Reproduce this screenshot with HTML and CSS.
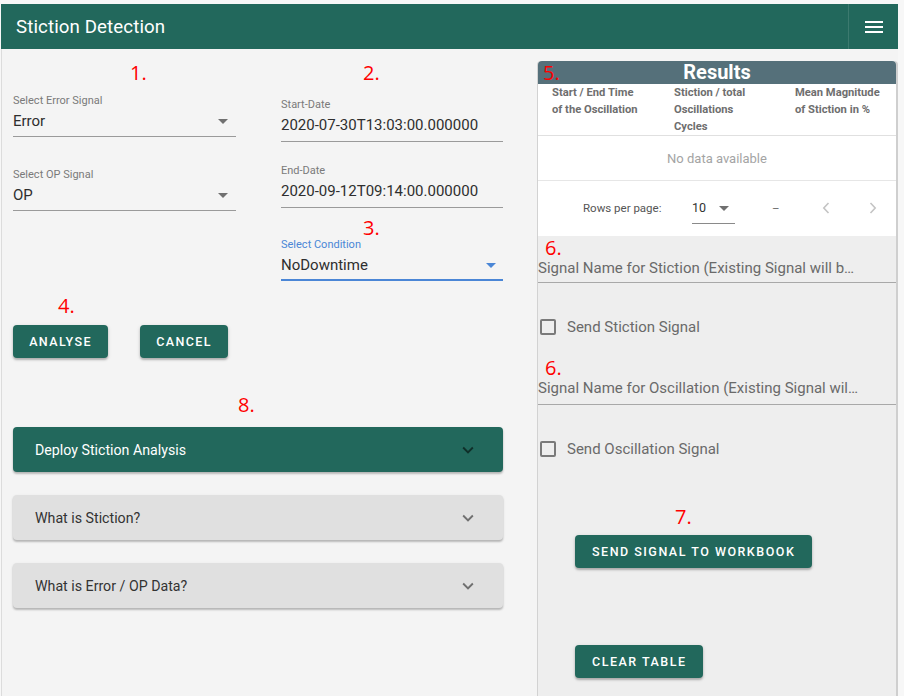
FILE: index.html
```html
<!DOCTYPE html>
<html lang="en">
<head>
<meta charset="utf-8">
<title>Stiction Detection</title>
<link rel="stylesheet" href="styles.css">
</head>
<body>
<div class="app">
  <header class="topbar">
    <div class="title">Stiction Detection</div>
    <div class="menu-btn">
      <svg width="24" height="24" viewBox="0 0 24 24"><path fill="#fff" d="M3,6H21V8H3V6M3,11H21V13H3V11M3,16H21V18H3V16Z"/></svg>
    </div>
  </header>
  <div class="main">
    <section class="left">
      <div class="fields">
        <div class="col">
          <div class="mark m1">1.</div>
          <div class="field select f-error">
            <div class="label">Select Error Signal</div>
            <div class="value"><span>Error</span><span class="caret"></span></div>
          </div>
          <div class="field select f-op">
            <div class="label">Select OP Signal</div>
            <div class="value"><span>OP</span><span class="caret"></span></div>
          </div>
        </div>
        <div class="col">
          <div class="mark m2">2.</div>
          <div class="field text f-start">
            <div class="label">Start-Date</div>
            <div class="value"><span>2020-07-30T13:03:00.000000</span></div>
          </div>
          <div class="field text f-end">
            <div class="label">End-Date</div>
            <div class="value"><span>2020-09-12T09:14:00.000000</span></div>
          </div>
          <div class="mark m3">3.</div>
          <div class="field select active f-cond">
            <div class="label">Select Condition</div>
            <div class="value"><span>NoDowntime</span><span class="caret"></span></div>
          </div>
        </div>
      </div>
      <div class="mark m4">4.</div>
      <div class="btn-row">
        <button class="btn">ANALYSE</button>
        <button class="btn">CANCEL</button>
      </div>
      <div class="mark m8">8.</div>
      <div class="panels">
        <div class="panel primary">
          <span>Deploy Stiction Analysis</span>
          <svg class="chev" width="22" height="22" viewBox="0 0 24 24"><path d="M7.41,8.58L12,13.17L16.59,8.58L18,10L12,16L6,10L7.41,8.58Z"/></svg>
        </div>
        <div class="panel">
          <span>What is Stiction?</span>
          <svg class="chev" width="22" height="22" viewBox="0 0 24 24"><path d="M7.41,8.58L12,13.17L16.59,8.58L18,10L12,16L6,10L7.41,8.58Z"/></svg>
        </div>
        <div class="panel">
          <span>What is Error / OP Data?</span>
          <svg class="chev" width="22" height="22" viewBox="0 0 24 24"><path d="M7.41,8.58L12,13.17L16.59,8.58L18,10L12,16L6,10L7.41,8.58Z"/></svg>
        </div>
      </div>
    </section>
    <section class="right">
      <div class="results-head">
        <span class="mark m5">5.</span>
        <span class="results-title">Results</span>
        <span></span>
      </div>
      <div class="table">
        <div class="thead">
          <div>Start / End Time<br>of the Oscillation</div>
          <div>Stiction / total<br>Oscillations<br>Cycles</div>
          <div>Mean Magnitude<br>of Stiction in %</div>
        </div>
        <div class="nodata">No data available</div>
        <div class="tfoot">
          <span class="rpp">Rows per page:</span>
          <span class="rpp-select"><span>10</span><span class="caret small"></span></span>
          <span class="dash">–</span>
          <svg class="pager" width="8" height="12" viewBox="0 0 8 12"><path d="M6.5 1 L1.8 6 L6.5 11" fill="none" stroke="#c4c4c4" stroke-width="1.6"/></svg>
          <svg class="pager" width="8" height="12" viewBox="0 0 8 12"><path d="M1.5 1 L6.2 6 L1.5 11" fill="none" stroke="#c4c4c4" stroke-width="1.6"/></svg>
        </div>
      </div>
      <div class="send">
        <div class="mark m6">6.</div>
        <div class="tfield">Signal Name for Stiction (Existing Signal will b…</div>
        <label class="check"><span class="box"></span><span>Send Stiction Signal</span></label>
        <div class="mark m6b">6.</div>
        <div class="tfield t2">Signal Name for Oscillation (Existing Signal wil…</div>
        <label class="check c2"><span class="box"></span><span>Send Oscillation Signal</span></label>
        <div class="mark m7">7.</div>
        <button class="btn wide">SEND SIGNAL TO WORKBOOK</button>
        <button class="btn wide clear">CLEAR TABLE</button>
      </div>
    </section>
  </div>
</div>
</body>
</html>
```
FILE: styles.css
```css
* { box-sizing: border-box; }
html, body { margin: 0; padding: 0; }
body {
  background: #f7f7f7;
  font-family: Roboto, "Liberation Sans", sans-serif;
  height: 696px;
  overflow: hidden;
}
.app {
  margin: 4px 6px 0 1px;
  height: 692px;
  display: flex;
  flex-direction: column;
}
.topbar {
  height: 45px;
  background: #22685c;
  display: flex;
  align-items: center;
  justify-content: space-between;
  color: #fff;
  flex: none;
}
.title {
  padding-left: 15px;
  font-size: 18.7px;
  letter-spacing: 0.1px;
}
.menu-btn {
  width: 50px;
  height: 45px;
  border-left: 1px solid rgba(255,255,255,0.12);
  display: flex;
  align-items: center;
  justify-content: center;
}
.main {
  flex: 1;
  display: flex;
  background: #f4f4f4;
  border-left: 1px solid #dcdcdc;
}
.left {
  width: 535px;
  padding: 13px 34px 0 11px;
}
.mark {
  color: #ff0000;
  font-family: "Open Sans", "Liberation Sans", sans-serif;
  font-size: 20px;
  line-height: 22px;
  height: 22px;
}
.fields {
  display: grid;
  grid-template-columns: 223px 222px;
  column-gap: 45px;
}
.col { display: flex; flex-direction: column; }
.m1 { padding-left: 117px; }
.m2 { padding-left: 82px; }
.m3 { padding-left: 82px; margin-top: 10px; line-height: 20px; height: 20px; }
.field { border-bottom: 1px solid #9a9a9a; }
.field .label {
  font-size: 11px;
  line-height: 14px;
  color: #7a7a7a;
}
.field .value {
  margin-top: 3px;
  font-size: 15px;
  line-height: 20px;
  color: #2e2e2e;
  display: flex;
  justify-content: space-between;
  align-items: center;
  padding-bottom: 5px;
}
.field.text .value { padding-bottom: 6px; }
.caret {
  width: 0; height: 0;
  border-left: 5px solid transparent;
  border-right: 5px solid transparent;
  border-top: 5px solid #707070;
  margin-right: 8px;
}
.f-error { margin-top: 10px; }
.f-op { margin-top: 31px; }
.f-start { margin-top: 14px; }
.f-end { margin-top: 22px; }
.field.active { border-bottom: 2px solid #4a86d6; }
.field.active .label { color: #4a86d6; }
.field.active .value { padding-bottom: 4px; }
.field.active .caret { border-top-color: #4a86d6; margin-right: 7px; }

.m4 { padding-left: 45px; margin-top: 14px; }
.btn-row { display: flex; gap: 32px; margin-top: 8px; }
.btn {
  height: 33px;
  border: none;
  border-radius: 4px;
  background: #22685c;
  color: #fff;
  font-family: Roboto, "Liberation Sans", sans-serif;
  font-weight: 500;
  font-size: 12.5px;
  letter-spacing: 1.4px;
  padding: 0 15px;
  box-shadow: 0 2px 2px rgba(0,0,0,0.22), 0 1px 4px rgba(0,0,0,0.12);
  cursor: pointer;
}
.btn-row .btn:first-child { width: 95px; }
.btn-row .btn:last-child { width: 88px; }
.m8 { padding-left: 225px; margin-top: 36px; }
.panels { margin-top: 11px; display: flex; flex-direction: column; gap: 23px; }
.panel {
  height: 45px;
  border-radius: 4px;
  background: #e0e0e0;
  display: flex;
  align-items: center;
  justify-content: space-between;
  padding: 0 24px 0 22px;
  font-size: 14.2px;
  color: #333;
  box-shadow: 0 2px 2px rgba(0,0,0,0.2), 0 1px 3px rgba(0,0,0,0.1);
}
.panel .chev path { fill: #707070; }
.panel.primary { background: #22685c; color: #fff; }
.panel.primary .chev path { fill: rgba(0,0,0,0.55); }

.right {
  width: 362px;
  margin-top: 12px;
  background: #eeeeee;
  border-left: 1px solid #d2d2d2;
  border-right: 2px solid #cfcfcf;
  border-radius: 4px 4px 0 0;
  display: flex;
  flex-direction: column;
}
.results-head {
  height: 23px;
  background: #55707a;
  border-radius: 4px 4px 0 0;
  display: grid;
  grid-template-columns: 1fr auto 1fr;
  align-items: center;
}
.m5 { padding-left: 5px; line-height: 23px; height: 23px; }
.results-title {
  color: #fff;
  font-weight: 700;
  font-size: 20px;
  line-height: 23px;
}
.table { background: #fff; }
.thead {
  display: grid;
  grid-template-columns: 122px 121px 1fr;
  padding-left: 14px;
  height: 52px;
  font-size: 11.2px;
  font-weight: 700;
  line-height: 17px;
  color: #6e6e6e;
  border-bottom: 1px solid #e0e0e0;
}
.nodata {
  height: 45px;
  display: flex;
  align-items: center;
  justify-content: center;
  font-size: 13px;
  color: #a4a4a4;
  border-bottom: 1px solid #e6e6e6;
}
.tfoot {
  height: 55px;
  display: grid;
  grid-template-columns: 109px 80px 50px 47px 1fr;
  padding: 18px 0 0 45px;
  font-size: 11.5px;
  line-height: 18px;
  color: #555;
  align-items: start;
}
.rpp-select {
  width: 43px;
  display: flex;
  justify-content: space-between;
  align-items: center;
  border-bottom: 1px solid #8a8a8a;
  padding-bottom: 6px;
  font-size: 12.5px;
  color: #333;
}
.caret.small { margin-right: 6px; }
.dash { color: #666; }
.pager { margin-top: 3px; }
.send {
  display: flex;
  flex-direction: column;
  align-items: flex-start;
}
.m6 { padding-left: 7px; margin-top: 2px; line-height: 20px; height: 20px; }
.m6b { padding-left: 7px; margin-top: 21px; line-height: 20px; height: 20px; }
.tfield {
  width: 100%;
  font-size: 15px;
  line-height: 20px;
  color: #6a6a6a;
  padding-bottom: 4px;
  border-bottom: 1px solid #a8a8a8;
  white-space: nowrap;
  overflow: hidden;
}
.tfield.t2 { padding-bottom: 6px; }
.check {
  display: flex;
  align-items: center;
  margin-top: 34px;
  height: 20px;
  font-size: 15px;
  color: #6a6a6a;
}
.check .box {
  width: 16px;
  height: 16px;
  border: 2px solid #7a7a7a;
  border-radius: 2px;
  margin: 0 11px 0 2px;
}
.m7 { padding-left: 137px; margin-top: 47px; }
.btn.wide { margin-left: 37px; margin-top: 7px; padding: 0 17px; letter-spacing: 1.5px; }
.btn.clear { margin-top: 77px; }
```
